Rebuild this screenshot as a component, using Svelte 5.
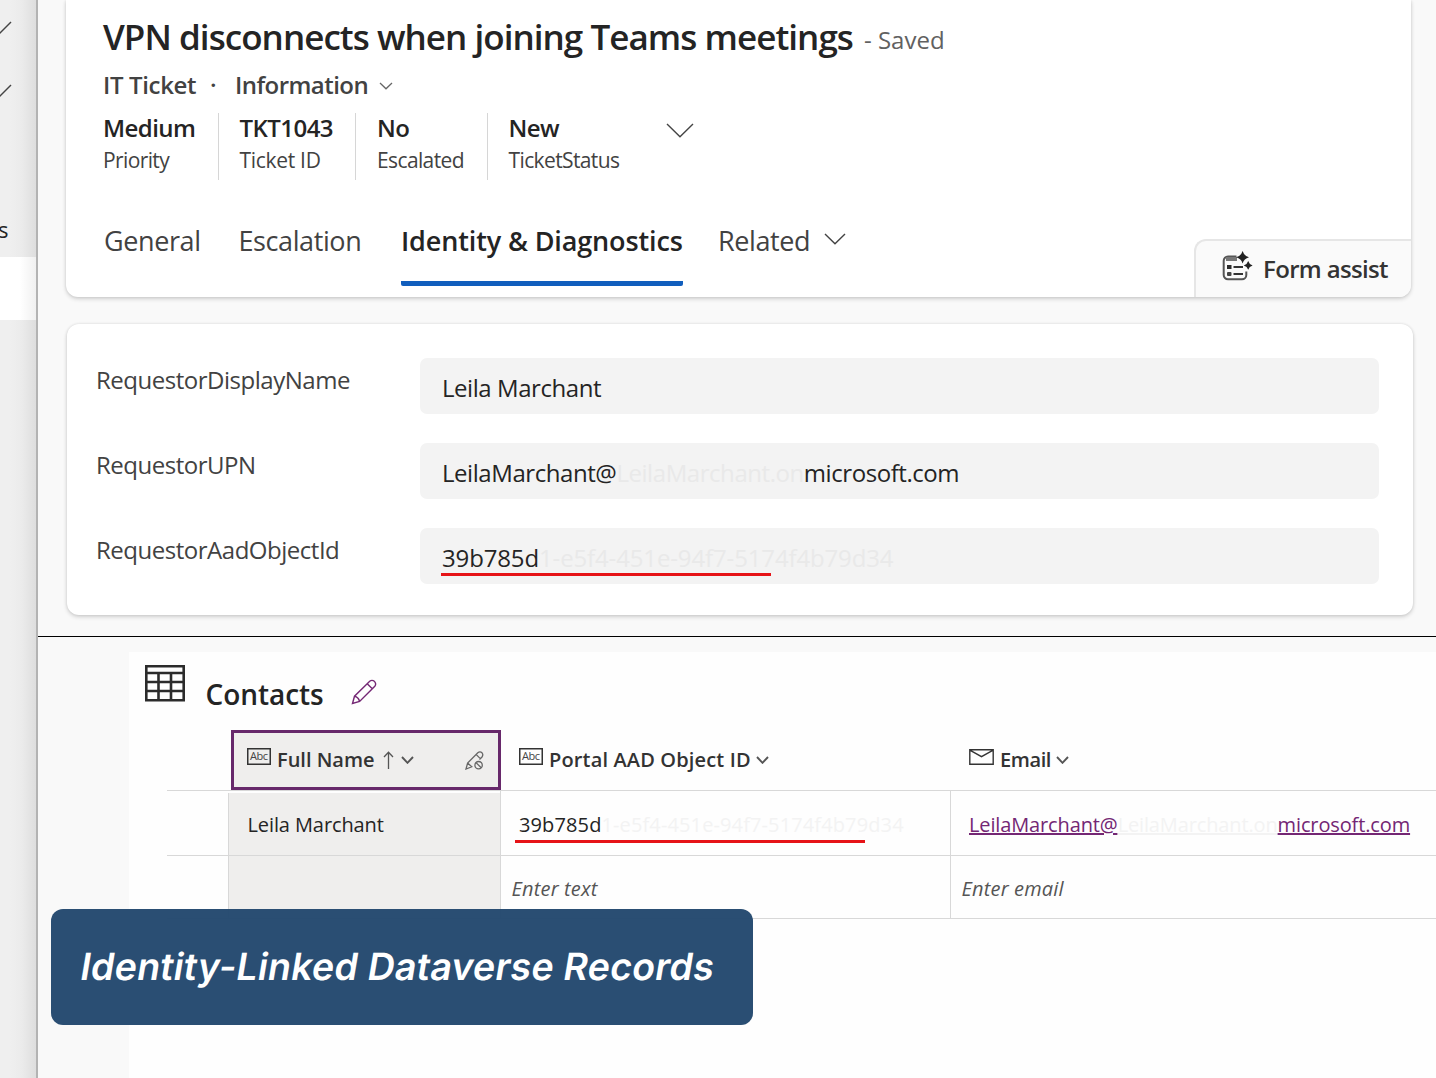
<script>
	const stats = [
		{ value: 'Medium', label: 'Priority' },
		{ value: 'TKT1043', label: 'Ticket ID' },
		{ value: 'No', label: 'Escalated' },
		{ value: 'New', label: 'TicketStatus' }
	];

	const tabs = ['General', 'Escalation', 'Identity & Diagnostics', 'Related'];
	let activeTab = $state('Identity & Diagnostics');

	// hidden = the part of the value that is masked out
	const fields = [
		{ name: 'RequestorDisplayName', start: 'Leila Marchant' },
		{
			name: 'RequestorUPN',
			start: 'LeilaMarchant@',
			hidden: 'LeilaMarchant.on',
			end: 'microsoft.com'
		},
		{
			name: 'RequestorAadObjectId',
			start: '39b785d',
			hidden: '1-e5f4-451e-94f7-5174f4b79d34',
			marked: true
		}
	];
</script>

{#snippet chevron(width, height, stroke)}
	<svg class="chevron" {width} {height} viewBox="0 0 {width} {height}">
		<path
			d="M1 1 L{width / 2} {height - 1.2} L{width - 1} 1"
			fill="none"
			stroke="currentColor"
			stroke-width={stroke}
		/>
	</svg>
{/snippet}

{#snippet abc()}
	<svg class="type-icon" width="24" height="17" viewBox="0 0 24 17">
		<rect x="0.75" y="0.75" width="22.5" height="15.5" fill="none" stroke="#333" stroke-width="1.5" />
		<text x="12" y="12" text-anchor="middle" textLength="18" class="abc">Abc</text>
	</svg>
{/snippet}

<div class="screen">
	<aside class="sidebar">
		<div class="side-top">
			<svg class="side-chevron" width="12" height="16" viewBox="0 0 12 16">
				<path d="M-1 14 L11 2" fill="none" stroke="#444" stroke-width="1.5" />
			</svg>
			<svg class="side-chevron" width="12" height="16" viewBox="0 0 12 16">
				<path d="M-1 14 L11 2" fill="none" stroke="#444" stroke-width="1.5" />
			</svg>
			<span class="side-text">s</span>
		</div>
		<div class="side-active"></div>
	</aside>

	<main>
		<section class="form">
			<header class="card head">
				<div class="title-row">
					<h1>VPN disconnects when joining Teams meetings</h1>
					<span class="saved">- Saved</span>
				</div>
				<div class="sub-row">
					<span class="entity">IT Ticket</span>
					<span class="dot">·</span>
					<span class="form-name">Information</span>
					{@render chevron(14, 8, 1.3)}
				</div>
				<div class="stats">
					{#each stats as stat}
						<div class="stat">
							<strong>{stat.value}</strong>
							<span>{stat.label}</span>
						</div>
					{/each}
					<div class="expand">{@render chevron(28, 15, 1.4)}</div>
				</div>
				<div class="tab-row">
					<nav class="tabs">
						{#each tabs as tab}
							<button class="tab" class:active={tab === activeTab} onclick={() => (activeTab = tab)}>
								{tab}
								{#if tab === 'Related'}
									{@render chevron(22, 12, 1.4)}
								{/if}
							</button>
						{/each}
					</nav>
					<button class="assist">
						<svg width="32" height="32" viewBox="0 0 32 32">
							<path
								d="M15.5 5.5 H7 a4.3 4.3 0 0 0 -4.3 4.3 V24 a4.3 4.3 0 0 0 4.3 4.3 H21 a4.3 4.3 0 0 0 4.3 -4.3 V20.5"
								fill="none"
								stroke="#555"
								stroke-width="2"
							/>
							<path d="M5 6 H16 V10 H5 Z" fill="#777" />
							<rect x="6" y="14" width="4.5" height="4" fill="#2b2b2b" />
							<rect x="6" y="21" width="4.5" height="4" rx="1" fill="#444" />
							<path d="M12.5 16 H22 M12.5 23 H22" stroke="#333" stroke-width="2" />
							<path
								d="M21.6 0 Q23 4.9 28 6.3 Q23 7.7 21.6 12.6 Q20.2 7.7 15.2 6.3 Q20.2 4.9 21.6 0 Z"
								fill="#222"
							/>
							<path
								d="M27.2 10 Q28.2 13.4 31.6 14.4 Q28.2 15.4 27.2 18.8 Q26.2 15.4 22.8 14.4 Q26.2 13.4 27.2 10 Z"
								fill="#222"
							/>
						</svg>
						<span>Form assist</span>
					</button>
				</div>
			</header>

			<div class="card fields">
				{#each fields as field}
					<div class="field">
						<span class="field-name">{field.name}</span>
						<div class="field-value" class:guid={field.marked}>
							<span class="shown">{field.start}</span><span class="masked">{field.hidden}</span><span
								class="shown-end">{field.end}</span
							>
							{#if field.marked}
								<i class="mark"></i>
							{/if}
						</div>
					</div>
				{/each}
			</div>
		</section>

		<section class="records">
			<div class="panel">
				<div class="panel-title">
					<svg width="40" height="37" viewBox="0 0 40 37">
						<path
							d="M1.3 1.3 H38.7 V35.3 H1.3 Z M1.3 8 H38.7 M1.3 17 H38.7 M1.3 26 H38.7 M13.5 8 V35.3 M26 8 V35.3"
							fill="none"
							stroke="#2b2b2b"
							stroke-width="2.6"
						/>
					</svg>
					<h2>Contacts</h2>
					<svg class="pencil" width="26" height="26" viewBox="0 0 26 26">
						<path
							d="M1.5 24.5 L3.5 17.2 L18.7 2.2 Q21.2 0.4 23.6 2.6 Q25.6 5 23.8 7.3 L8.6 22.5 Z M16.2 4.8 L21.3 9.8 M3.5 17.2 Q7.5 18 8.6 22.5"
							fill="none"
							stroke="#742774"
							stroke-width="1.4"
						/>
					</svg>
				</div>

				<div class="table">
					<div class="row row-head">
						<div></div>
						<div class="th selected">
							{@render abc()}
							<span>Full Name</span>
							<svg class="sort" width="11" height="18" viewBox="0 0 11 18">
								<path d="M5.5 18 V1.5 M1 6 L5.5 1.2 L10 6" fill="none" stroke="#555" stroke-width="1.3" />
							</svg>
							{@render chevron(13, 8, 1.9)}
							<svg class="locked" width="19" height="19" viewBox="0 0 19 19">
								<path
									d="M7.5 15.5 L1 18 L2.6 12 L12.8 1.8 Q15 0 17 1.8 Q18.6 3.8 17 6 L14.5 8.5 M11.3 3.6 L15.3 7.6 M2.6 12 L7 16"
									fill="none"
									stroke="#666"
									stroke-width="1.3"
								/>
								<circle cx="13.6" cy="14.2" r="3.7" fill="none" stroke="#666" stroke-width="1.3" />
								<path d="M11 11.6 L16.2 16.8" stroke="#666" stroke-width="1.3" />
							</svg>
						</div>
						<div class="th">
							{@render abc()}
							<span class="portal">Portal AAD Object ID</span>
							{@render chevron(13, 8, 1.9)}
						</div>
						<div class="th">
							<svg class="type-icon" width="25" height="16" viewBox="0 0 25 16">
								<path
									d="M0.8 0.8 H24.2 V15.2 H0.8 Z M0.8 1.2 L12.5 7.6 L24.2 1.2"
									fill="none"
									stroke="#333"
									stroke-width="1.4"
								/>
							</svg>
							<span class="mail">Email</span>
							{@render chevron(13, 8, 1.9)}
						</div>
					</div>
					<div class="row">
						<div></div>
						<div class="td shaded first">Leila Marchant</div>
						<div class="td id">
							<span class="shown">39b785d</span><span class="masked"
								>1-e5f4-451e-94f7-5174f4b79d34</span
							>
							<i class="mark"></i>
						</div>
						<div class="td email">
							<span class="link">LeilaMarchant@</span><span class="masked">LeilaMarchant.on</span><span
								class="link">microsoft.com</span
							>
						</div>
					</div>
					<div class="row last">
						<div></div>
						<div class="td shaded"></div>
						<div class="td hint">Enter text</div>
						<div class="td hint">Enter email</div>
					</div>
				</div>
			</div>
		</section>
	</main>

	<div class="banner"><span>Identity-Linked Dataverse Records</span></div>
</div>

<style>
	:global(body) {
		margin: 0;
		overflow: hidden;
	}
	.screen {
		position: relative;
		display: flex;
		width: 1436px;
		height: 1078px;
		overflow: hidden;
		background: #f9f9f9;
		color: #242424;
		font-family: 'Open Sans', 'Noto Sans', sans-serif;
	}
	svg {
		display: block;
		flex: none;
	}
	button {
		border: 0;
		padding: 0;
		background: none;
		color: inherit;
		font: inherit;
		text-align: left;
	}
	span,
	h1,
	h2,
	strong {
		white-space: nowrap;
	}

	.sidebar {
		box-sizing: border-box;
		flex: none;
		width: 38px;
		border-right: 2px solid #b3b3b3;
		background: linear-gradient(to right, #efefef 10px, #ebebeb 22px, #dedede 36px);
	}
	.side-top {
		display: flex;
		flex-direction: column;
		height: 257px;
		padding-top: 20px;
		box-sizing: border-box;
	}
	.side-chevron + .side-chevron {
		margin-top: 47px;
	}
	.side-text {
		margin: 115px 0 0 -2px;
		font-size: 22px;
		line-height: 30px;
	}
	.side-active {
		height: 63px;
		background: linear-gradient(to right, #fff 20px, #f0f0f0 36px);
	}

	main {
		display: flex;
		flex: 1;
		flex-direction: column;
		min-width: 0;
	}
	.form {
		box-sizing: border-box;
		height: 637px;
		padding: 0 23px 0 28px;
		border-bottom: 1px solid #000;
	}
	.card {
		box-sizing: border-box;
		border-radius: 12px;
		background: #fff;
		box-shadow:
			0 2px 4px rgba(0, 0, 0, 0.16),
			0 0 3px rgba(0, 0, 0, 0.1);
	}

	.head {
		display: flex;
		flex-direction: column;
		width: 1345px;
		height: 297px;
		padding: 13px 0 0 37px;
		border-radius: 0 0 12px 12px;
	}
	.title-row {
		display: flex;
		height: 46px;
	}
	h1 {
		width: 761px;
		margin: 0;
		font-size: 35px;
		font-weight: 600;
		letter-spacing: -0.95px;
		line-height: 48px;
	}
	.saved {
		padding-top: 5px;
		color: #616161;
		font-size: 24px;
		line-height: 44px;
	}
	.sub-row {
		display: flex;
		align-items: center;
		height: 32px;
		margin-top: 10px;
		color: #424242;
		font-size: 24px;
		font-weight: 600;
		letter-spacing: -0.55px;
		line-height: 32px;
	}
	.entity {
		width: 107px;
		letter-spacing: -0.35px;
	}
	.dot {
		width: 25px;
	}
	.form-name {
		width: 144px;
	}
	.sub-row .chevron {
		margin-top: 2px;
		color: #666;
	}
	.stats {
		display: grid;
		grid-template-columns: 114.5px 137.5px 131.5px 179.5px auto;
		height: 67px;
		margin-top: 12px;
	}
	.stat {
		display: flex;
		flex-direction: column;
		gap: 2px;
		padding-left: 21px;
		border-left: 1px solid #d6d6d6;
	}
	.stat:first-child {
		padding-left: 0;
		border-left: 0;
	}
	.stat strong {
		font-size: 24px;
		font-weight: 600;
		letter-spacing: -0.55px;
		line-height: 30px;
	}
	.stat span {
		color: #424242;
		font-size: 21px;
		letter-spacing: -0.62px;
		line-height: 30px;
	}
	.stat:nth-child(2) span {
		letter-spacing: -0.3px;
	}
	.expand {
		padding-top: 10px;
		color: #444;
	}

	.tab-row {
		display: flex;
		justify-content: space-between;
		height: 117px;
	}
	.tabs {
		display: grid;
		grid-template-columns: 134.5px 162.5px 317px auto;
		justify-items: start;
		height: 66px;
		margin-top: 40px;
		padding-left: 1px;
	}
	.tab {
		display: flex;
		gap: 14px;
		box-sizing: border-box;
		height: 66px;
		padding-top: 1px;
		color: #424242;
		font-size: 27px;
		letter-spacing: -0.4px;
		line-height: 40px;
		white-space: nowrap;
	}
	.tab.active {
		border-bottom: 5px solid #115ebd;
		border-radius: 2px;
		color: #242424;
		font-weight: 600;
		letter-spacing: -0.13px;
	}
	.tab .chevron {
		margin-top: 12px;
	}
	.assist {
		display: flex;
		align-items: center;
		gap: 10px;
		box-sizing: border-box;
		width: 217px;
		height: 58px;
		margin-top: 59px;
		padding: 0 0 2px 25px;
		border: 2px solid #e6e6e6;
		border-right: 0;
		border-bottom: 0;
		border-radius: 12px 0 12px 0;
		background: #fafafa;
		color: #333;
		font-size: 24px;
		font-weight: 600;
		letter-spacing: -0.65px;
	}
	.assist svg {
		margin-top: -2px;
	}
	.assist span {
		padding-top: 1px;
	}

	.fields {
		display: flex;
		flex-direction: column;
		gap: 29px;
		width: 1346px;
		height: 291px;
		margin: 27px 0 0 1px;
		padding: 34px 34px 0 29px;
	}
	.field {
		display: flex;
		height: 56px;
		font-size: 24px;
	}
	.field-name {
		width: 324px;
		color: #424242;
		letter-spacing: -0.48px;
		line-height: 43px;
	}
	.field-value {
		position: relative;
		display: flex;
		flex: 1;
		padding: 2px 0 0 22px;
		border-radius: 7px;
		background: #f3f3f3;
		letter-spacing: -0.44px;
		line-height: 56px;
	}
	.field-value.guid {
		letter-spacing: -0.14px;
	}
	.field-value .masked {
		color: #e9e9e9;
	}
	.mark {
		position: absolute;
		height: 3px;
		background: #e61317;
	}
	.field-value .mark {
		left: 21px;
		bottom: 8px;
		width: 330px;
	}

	.records {
		flex: 1;
		padding: 15px 0 0 91px;
	}
	.panel {
		box-sizing: border-box;
		height: 426px;
		padding: 13px 0 0 16px;
		background: #fefefe;
	}
	.panel-title {
		display: flex;
		height: 65px;
	}
	h2 {
		width: 145px;
		margin: 9px 0 0 20.5px;
		font-size: 28px;
		font-weight: 600;
		letter-spacing: -0.05px;
		line-height: 40px;
	}
	.pencil {
		margin-top: 14px;
	}
	.table {
		margin-left: 22px;
		color: #242424;
		font-size: 20px;
	}
	.row {
		display: grid;
		grid-template-columns: 61px 272px 450px 1fr;
		grid-template-rows: 100%;
		box-sizing: border-box;
		height: 64.5px;
		border-bottom: 1px solid #d8d8d8;
	}
	.row-head {
		height: 61px;
	}
	.row.last {
		height: 63px;
	}
	.th {
		display: flex;
		align-items: center;
		padding-left: 19px;
		color: #333;
		font-weight: 600;
		line-height: 60px;
	}
	.th.selected {
		box-sizing: border-box;
		width: 270px;
		height: 60px;
		margin-left: 3px;
		padding-left: 13px;
		border: 3px solid #67286b;
		background: #efeeed;
	}
	.type-icon {
		margin: -7px 6px 0 0;
	}
	.abc {
		fill: #444;
		font-family: 'Open Sans', sans-serif;
		font-size: 11px;
		font-weight: 500;
	}
	.th .chevron {
		color: #555;
	}
	.portal {
		width: 207px;
		letter-spacing: 0.15px;
	}
	.mail {
		width: 56px;
		letter-spacing: -0.4px;
	}
	.sort {
		margin: 0 7px 0 8px;
	}
	.locked {
		margin-left: auto;
		margin-right: 14px;
	}
	.td {
		position: relative;
		display: flex;
		padding-left: 18px;
		border-left: 1px solid #d8d8d8;
		line-height: 67px;
	}
	.td.shaded {
		padding-left: 18.5px;
		background: #efeeed;
		letter-spacing: -0.1px;
	}
	.td.first {
		margin-top: 2px;
		line-height: 63px;
	}
	.td.id {
		letter-spacing: 0.12px;
	}
	.td.email {
		letter-spacing: -0.13px;
	}
	.td.hint {
		padding-left: 10.5px;
		color: #555;
		font-style: italic;
		letter-spacing: 0.18px;
		line-height: 65px;
	}
	.td .masked {
		color: #f3f3f3;
	}
	.email .masked {
		text-decoration: underline;
	}
	.td .mark {
		left: 14px;
		bottom: 12px;
		width: 350px;
	}
	.link {
		color: #742774;
		text-decoration: underline;
	}

	.banner {
		position: absolute;
		left: 51px;
		top: 909px;
		box-sizing: border-box;
		width: 702px;
		height: 116px;
		padding-left: 30px;
		border-radius: 12px;
		background: rgba(35, 72, 110, 0.97);
		color: #fff;
		font-family: Inter, sans-serif;
		font-size: 37.5px;
		font-weight: 600;
		letter-spacing: 0.23px;
		line-height: 115px;
		white-space: nowrap;
	}
	.banner span {
		display: inline-block;
		transform: skewX(-9.5deg);
	}
</style>
